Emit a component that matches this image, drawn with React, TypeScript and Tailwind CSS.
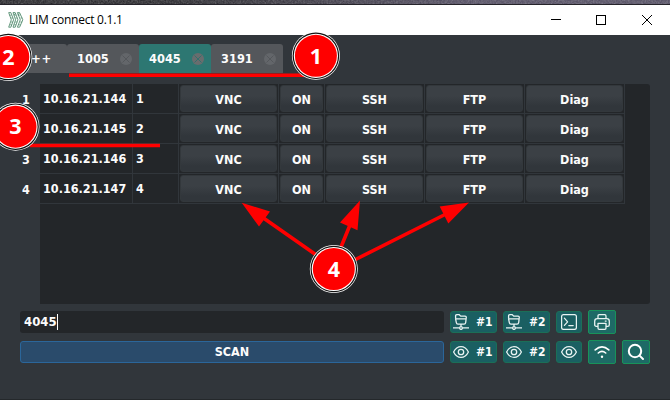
import React from "react";

const UI = "font-['DejaVu_Sans_Condensed','DejaVu_Sans',sans-serif] font-bold [font-stretch:condensed] text-[#fcfcfc]";

const rows = [
  { id: "1", ip: "10.16.21.144" },
  { id: "2", ip: "10.16.21.145" },
  { id: "3", ip: "10.16.21.146" },
  { id: "4", ip: "10.16.21.147" },
];

function LogoIcon() {
  return (
    <svg width="16" height="16" viewBox="0 0 16 16" fill="none" stroke="#3f8060" strokeWidth="0.8">
      <path d="M.7.6h2.2l2.7 7.2-2.7 7.4H.7l2.6-7.4zM5 .6h2.2l2.7 7.2-2.7 7.4H5l2.6-7.4zM9.4.6h2.2l3.2 7.2-3.2 7.4H9.4l2.9-7.4z" />
      <path d="M1.5 3.2h2m4-2.1-1.4 2h2m3.2-2-1.4 2h2.4M3 6h2m2.4 0h2m3 0h2M3 10h2m2.2 0h2m3 0h2M2 12.8h2m2 0h2m2.6 0h2" strokeWidth=".6" />
    </svg>
  );
}

function Tab({ label, active = false }: { label: string; active?: boolean }) {
  return (
    <div className={`flex h-[29px] w-[72px] items-center rounded-t-[3px] pl-[10px] ${active ? "bg-[#2d7772]" : "bg-[#54575b]"}`}>
      <span className="w-[43px] text-[12.7px] leading-[30px]">{label}</span>
      <svg width="12" height="12" viewBox="0 0 12 12">
        <circle cx="6" cy="6" r="6" fill={active ? "#686d6e" : "#63666a"} />
        <path d="M2.5 2.5l7 7m0-7l-7 7" stroke={active ? "#356f6c" : "#54575b"} strokeWidth="1" />
      </svg>
    </div>
  );
}

function CellButton({ label }: { label: string }) {
  return (
    <div className="border-b border-r border-[#31363b] p-px">
      <div className="flex h-[27px] items-center justify-center rounded-[3px] border border-[#33383c] bg-linear-to-b from-[#3b4045] from-40% to-[#31363b] to-80% pt-px">
        {label}
      </div>
    </div>
  );
}

function FolderIcon() {
  return (
    <svg width="16" height="16" viewBox="0 0 16 16" fill="none" stroke="#e8f3f2" strokeWidth="1.3" strokeLinejoin="round">
      <path d="M2.6 4.2V1.8Q2.6.7 3.7.7h2.6l1.4 1.4h4.4q1.2 0 1.2 1.2l-.6 5.2q-.2 1.6-1.7 1.6H5q-1.5 0-1.7-1.6L2.6 4.8h10.6" />
      <path d="M8 10v2.6M0 13.9h6.3m3.4 0H16" />
      <circle cx="8" cy="14" r="1.4" />
    </svg>
  );
}

function EyeIcon() {
  return (
    <svg width="16" height="16" viewBox="0 0 16 16" fill="none" stroke="#e8f3f2" strokeWidth="1.3">
      <path d="M.6 8S3.3 2.6 8 2.6 15.4 8 15.4 8 12.7 13.4 8 13.4.6 8 .6 8z" />
      <circle cx="8" cy="8" r="2.7" />
    </svg>
  );
}

function TerminalIcon() {
  return (
    <svg width="16" height="16" viewBox="0 0 16 16" fill="none" stroke="#e8f3f2" strokeWidth="1.25" strokeLinecap="round" strokeLinejoin="round">
      <rect x=".6" y=".6" width="14.8" height="14.8" rx="2" />
      <path d="M3.4 4.2l3.2 3.6-3.2 3.6M7.8 11.5h4.4" />
    </svg>
  );
}

function PrinterIcon() {
  return (
    <svg width="16" height="16" viewBox="0 0 16 16" fill="none" stroke="#e8f3f2" strokeWidth="1.3" strokeLinejoin="round">
      <path d="M4 4.5V2Q4 .7 5.3.7h5.4Q12 .7 12 2v2.5M4 12.3H2.3q-1.6 0-1.6-1.6V7.3q0-2.6 2.6-2.6h9.4q2.6 0 2.6 2.6v3.4q0 1.6-1.6 1.6H12" />
      <path d="M4 9.3h8v4.8q0 1.2-1.2 1.2H5.2Q4 15.3 4 14.1zM10.8 7.2h1.8" />
    </svg>
  );
}

function WifiIcon() {
  return (
    <svg width="16" height="16" viewBox="0 0 16 16" fill="none" stroke="#fff" strokeWidth="1.6" strokeLinecap="round">
      <path d="M1.2 5.9Q8-.2 14.8 5.9M4.3 9Q8 5.8 11.7 9" />
      <circle cx="8" cy="12.8" r="1.2" fill="#fff" stroke="none" />
    </svg>
  );
}

function SearchIcon() {
  return (
    <svg width="18" height="18" viewBox="0 0 18 18" fill="none" stroke="#fff" strokeWidth="2" strokeLinecap="round">
      <circle cx="8" cy="8" r="6.2" />
      <path d="M12.6 12.6l3.4 3.4" />
    </svg>
  );
}

function Chip({ icon, label }: { icon: React.ReactNode; label: string }) {
  return (
    <div className="flex h-[22px] w-[47px] items-center rounded-[3px] border border-[#1b6f57] bg-[#1a5f62] pl-[2px]">
      {icon}
      <span className="ml-[7px] text-[12px] leading-[21px]">{label}</span>
    </div>
  );
}

function SquareChip({ children }: { children: React.ReactNode }) {
  return <div className="flex h-[22px] w-[26px] items-center justify-center rounded-[3px] border border-[#1b6f57] bg-[#1a5f62]">{children}</div>;
}

function GreenChip({ children }: { children: React.ReactNode }) {
  return <div className="flex h-6 w-7 items-center justify-center rounded-[2px] border border-[#18935a] bg-[#1e6a66]">{children}</div>;
}

function Marker({ n, x, y }: { n: string; x: number; y: number }) {
  return (
    <g>
      <circle cx={x} cy={y} r="24" fill="#fff" />
      <circle cx={x} cy={y} r="23.3" fill="#111" />
      <circle cx={x} cy={y} r="22.1" fill="#fff" />
      <circle cx={x} cy={y} r="21" fill="#f00" />
      <text x={x} y={y + 7.7} textAnchor="middle" fill="#fff" className="font-['Open_Sans',sans-serif] text-[21.5px] font-bold [font-stretch:normal]">{n}</text>
    </g>
  );
}

function Annotations() {
  return (
    <svg className="absolute inset-0" width="670" height="400" viewBox="0 0 670 400">
      <path d="M69 73.6H310V77H69zM30 143.8H160V147.2H30z" fill="#f00" />
      <path d="M317 255.5L262 217M340 249.5L350 225M353.5 260.5L446 214" stroke="#f00" strokeWidth="3.6" />
      <path d="M241.7 202.8L270 211.5 259 226.5zM360 200.5L340 222.5 357.5 230.2zM469 202.6L439.7 206.6 448.3 223.5z" fill="#f00" />
      <Marker n="1" x={315.9} y={55.8} />
      <Marker n="2" x={8.3} y={57} />
      <Marker n="3" x={15.5} y={126.7} />
      <Marker n="4" x={333.8} y={269} />
    </svg>
  );
}

export default function App() {
  return (
    <div className={`relative flex h-[400px] w-[670px] flex-col overflow-hidden border-b border-[#24282b] bg-[#31363b] ${UI}`}>
      <div className="h-[5px] shrink-0 border-b border-[#25232a] bg-linear-to-r from-[#222126] from-25% to-[#514b61] to-70%">
        <svg className="block" width="670" height="4">
          <filter id="grain">
            <feTurbulence type="fractalNoise" baseFrequency="0.6" numOctaves="2" seed="4" />
            <feColorMatrix type="saturate" values="0" />
          </filter>
          <rect width="670" height="4" filter="url(#grain)" opacity="0.4" />
        </svg>
      </div>

      <header className="flex h-[30px] shrink-0 items-center bg-white pl-2">
        <LogoIcon />
        <span className="ml-[5px] font-['Open_Sans',sans-serif] text-[12px] font-normal tracking-[-0.25px] text-black [font-stretch:normal]">LIM connect 0.1.1</span>
        <svg className="ml-auto mr-[18px]" width="101" height="10" viewBox="0 0 101 10" fill="none" stroke="#000">
          <path d="M0 4.5h10M91 0l10 10M101 0L91 10" />
          <rect x="45.5" y=".5" width="9" height="9" />
        </svg>
      </header>

      <div className="mt-[9px] flex h-[29px] shrink-0">
        <div className="w-[67px] rounded-t-[3px] bg-[#54575b] pl-[31px] text-[13px] leading-[30px] tracking-[0.8px]">++</div>
        <Tab label="1005" />
        <Tab label="4045" active />
        <Tab label="3191" />
      </div>

      <div className="ml-5 mt-[11px] flex h-[220px] w-[630px] shrink-0 text-[12.5px]">
        <div className="w-5">
          {rows.map((r) => (
            <div key={r.id} className="h-[30px] pl-[2px] pt-px text-[12.5px] leading-[30px]">{r.id}</div>
          ))}
        </div>
        <div className="flex-1 rounded-r-[3px] bg-[#232629]">
          {rows.map((r) => (
            <div key={r.id} className="grid h-[30px] w-[585px] grid-cols-[93px_46px_100px_46px_100px_100px_100px] leading-[25px]">
              <div className="whitespace-nowrap border-b border-r border-[#31363b] pl-[3px] leading-[29px]">{r.ip}</div>
              <div className="border-b border-r border-[#31363b] pl-[3px] leading-[29px]">{r.id}</div>
              <CellButton label="VNC" />
              <CellButton label="ON" />
              <CellButton label="SSH" />
              <CellButton label="FTP" />
              <CellButton label="Diag" />
            </div>
          ))}
        </div>
      </div>

      <div className="ml-5 mt-[6px] flex h-6 shrink-0 items-center gap-[6px]">
        <div className="flex h-[22px] w-[424px] items-center rounded-[3px] bg-[#232629] pl-1 text-[13px]">
          <span className="w-[33px]">4045</span>
          <span className="h-4 w-px bg-white" />
        </div>
        <Chip icon={<FolderIcon />} label="#1" />
        <Chip icon={<FolderIcon />} label="#2" />
        <SquareChip><TerminalIcon /></SquareChip>
        <GreenChip><PrinterIcon /></GreenChip>
      </div>

      <div className="ml-5 mt-[6px] flex h-6 shrink-0 items-center gap-[6px]">
        <div className="flex h-[22px] w-[424px] items-center justify-center rounded-[3px] border border-[#2b669a] bg-[#2a4b6b] text-[12.5px]">SCAN</div>
        <Chip icon={<EyeIcon />} label="#1" />
        <Chip icon={<EyeIcon />} label="#2" />
        <SquareChip><EyeIcon /></SquareChip>
        <GreenChip><WifiIcon /></GreenChip>
        <GreenChip><SearchIcon /></GreenChip>
      </div>

      <Annotations />
    </div>
  );
}
